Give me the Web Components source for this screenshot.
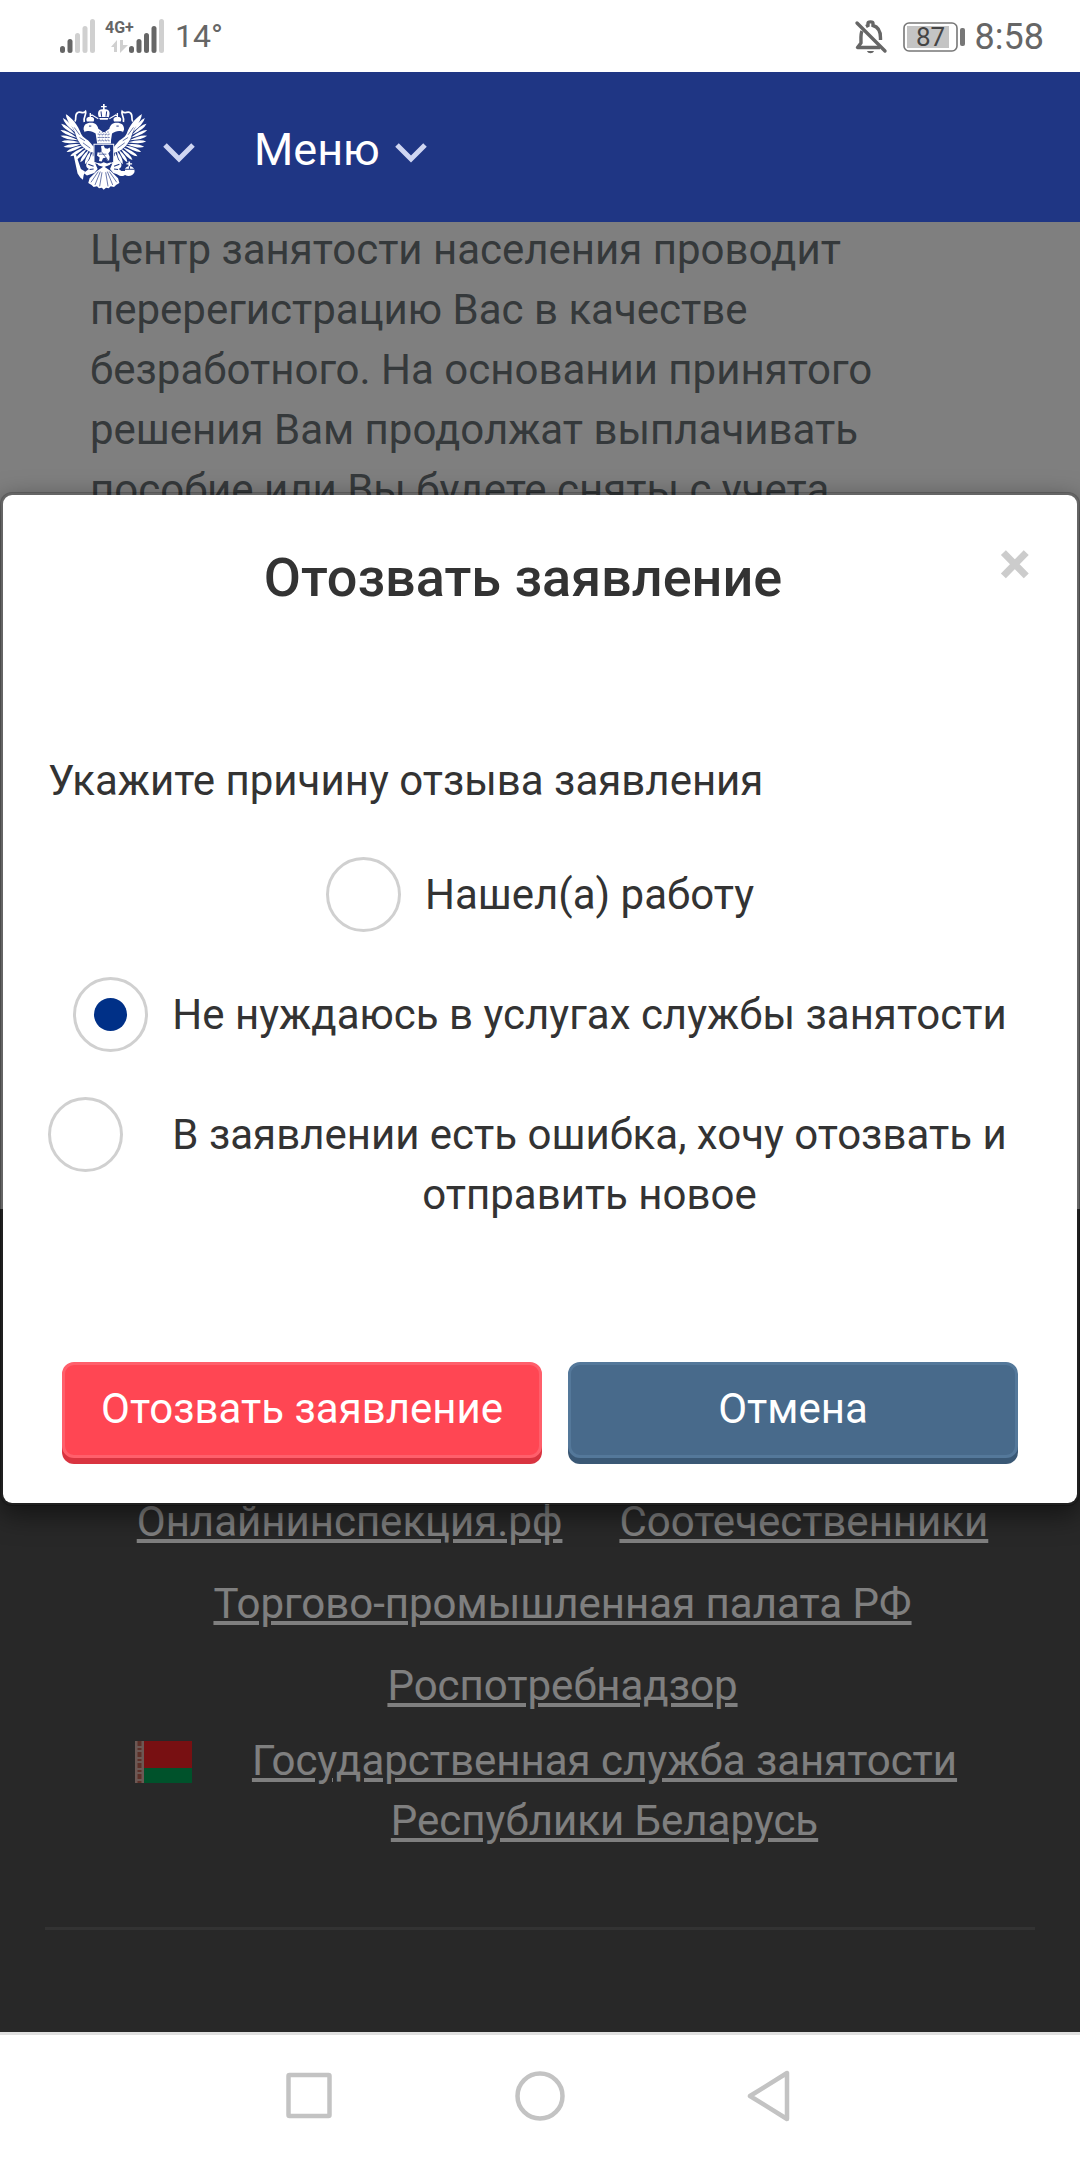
<!DOCTYPE html>
<html lang="ru">
<head>
<meta charset="utf-8">
<meta name="viewport" content="width=device-width, initial-scale=1">
<title>Отозвать заявление</title>
<style>
  * { box-sizing: border-box; }
  html, body { height: 100%; }
  body {
    margin: 0;
    background: #fff;
    color: #333;
    font-family: Roboto, "Noto Sans", sans-serif;
    font-size: 42px;
    line-height: 60px;
  }
</style>
</head>
<body>
<phone-screen>
  <status-bar slot="top"></status-bar>
  <site-header slot="top"></site-header>

  <page-article>Центр занятости населения проводит перерегистрацию Вас в качестве безработного. На основании принятого решения Вам продолжат выплачивать пособие или Вы будете сняты с учета</page-article>
  <site-footer></site-footer>

  <modal-dialog slot="overlay" heading="Отозвать заявление">
    <reason-list></reason-list>
    <action-button slot="actions" kind="danger">Отозвать заявление</action-button>
    <action-button slot="actions">Отмена</action-button>
  </modal-dialog>

  <system-nav slot="bottom"></system-nav>
</phone-screen>

<script>
class PhoneScreen extends HTMLElement {
  connectedCallback() {
    this.attachShadow({ mode: 'open' });
    this.shadowRoot.innerHTML = `
      <style>
        :host {
          display: flex;
          flex-direction: column;
          min-height: 100vh;
        }
        main {
          position: relative;
          flex: 1;
          min-height: 0;
          overflow: hidden;
        }
        /* the page is scrolled to its end */
        .scroll {
          height: 100%;
          display: flex;
          flex-direction: column;
          justify-content: flex-end;
          position: absolute;
          inset: 0;
        }
        .backdrop {
          position: absolute;
          inset: 0;
          padding-top: 270px;
          background: rgba(0, 0, 0, 0.5);
        }
      </style>
      <slot name="top"></slot>
      <main>
        <div class="scroll"><slot></slot></div>
        <div class="backdrop"><slot name="overlay"></slot></div>
      </main>
      <slot name="bottom"></slot>
    `;
  }
}

class StatusBar extends HTMLElement {
  connectedCallback() {
    this.attachShadow({ mode: 'open' });
    this.shadowRoot.innerHTML = `
      <style>
        :host {
          display: flex;
          align-items: center;
          justify-content: space-between;
          height: 72px;
          padding: 0 36px 0 60px;
          background: #fff;
          color: #666;
          line-height: 40px;
        }
        .group { display: flex; align-items: center; }
        .left { gap: 10px; }
        .right { gap: 10px; padding-top: 2px; }
        svg { display: block; overflow: visible; }
        .temp { font-size: 32px; }
        .bell { margin-right: 6px; }
        .clock { font-size: 36px; }
        .net { font-size: 16px; font-weight: 700; }
        .charge { font-size: 26px; }
      </style>
      <div class="group left">
        <svg width="35" height="34" viewBox="0 0 35 34" fill="#666">
          <rect x="0" y="27" width="5" height="7" rx="2.5"/>
          <rect x="7.5" y="20" width="5" height="14" rx="2.5"/>
          <g fill="#d0d0d0">
            <rect x="15" y="14" width="5" height="20" rx="2.5"/>
            <rect x="22.5" y="7" width="5" height="27" rx="2.5"/>
            <rect x="30" y="0" width="5" height="34" rx="2.5"/>
          </g>
        </svg>
        <svg width="60" height="34" viewBox="0 0 60 34" fill="#666">
          <text class="net" x="0" y="14">4G+</text>
          <path d="M6 28l6-7v12H9v-5zM15 21h3v5h5l-8 8z" fill="#d0d0d0"/>
          <rect x="24" y="27" width="5" height="7" rx="2.5"/>
          <rect x="31.5" y="20" width="5" height="14" rx="2.5"/>
          <rect x="39" y="14" width="5" height="20" rx="2.5"/>
          <rect x="46.5" y="7" width="5" height="27" rx="2.5"/>
          <rect x="54" y="0" width="5" height="34" rx="2.5" fill="#d0d0d0"/>
        </svg>
        <span class="temp">14°</span>
      </div>
      <div class="group right">
        <svg class="bell" width="32" height="34" viewBox="0 0 32 34" fill="none" stroke="#666" stroke-width="3.4">
          <path d="M2 3L30 31" stroke-linecap="round"/>
          <path d="M7 11C5.500 14 6 18 6 23L2.500 27.500H25" stroke-linejoin="round"/>
          <path d="M11 6.500L13 5.500V3.500C13 1.500 18 1.500 18 3.500V5.500C24 7 25.500 12 25.500 18V20"/>
          <path d="M12 31h7c-1 3-6 3-7 0z" fill="#666" stroke="none"/>
        </svg>
        <svg width="62" height="30" viewBox="0 0 62 30">
          <rect x="1" y="1" width="53" height="28" rx="5" fill="#fff" stroke="#777" stroke-width="1.600"/>
          <rect x="4" y="4" width="42" height="22" fill="#c4c4c4"/>
          <rect x="57" y="6" width="5" height="18" rx="2" fill="#777"/>
          <text class="charge" x="13" y="24" fill="#444">87</text>
        </svg>
        <span class="clock">8:58</span>
      </div>
    `;
  }
}

// outer wing feathers: base point and tip, left side
const FEATHERS = [
  [72, 104, 47, 58], [74, 112, 38, 70], [76, 120, 33, 87], [80, 129, 31, 106],
  [84, 136, 31, 123], [88, 142, 34, 140], [92, 148, 40, 156], [98, 152, 49, 171],
  [104, 157, 60, 184], [110, 161, 75, 195], [116, 165, 90, 202], [122, 168, 104, 208], [127, 172, 119, 210]
];

function feather([bx, by, tx, ty]) {
  const dx = tx - bx, dy = ty - by;
  const len = Math.hypot(dx, dy);
  const nx = -dy / len * 9, ny = dx / len * 9;
  const mx = bx + dx * 0.7, my = by + dy * 0.7;
  return `M${bx} ${by}Q${mx + nx} ${my + ny} ${tx} ${ty}Q${mx - nx} ${my - ny} ${bx} ${by}z`;
}

class SiteHeader extends HTMLElement {
  connectedCallback() {
    this.attachShadow({ mode: 'open' });
    this.shadowRoot.innerHTML = `
      <style>
        :host {
          display: flex;
          align-items: center;
          gap: 58px;
          box-sizing: border-box;
          height: 150px;
          padding: 5px 60px 0;
          background: #1f3684;
          color: #fff;
        }
        button {
          display: flex;
          align-items: center;
          gap: 14px;
          padding: 0;
          border: 0;
          background: none;
          color: inherit;
          font: inherit;
          font-size: 45px;
          cursor: pointer;
        }
        svg { display: block; }
        .eagle { margin-bottom: 5px; }
        .chevron { fill: none; stroke: #cfd6f2; stroke-width: 5; }
      </style>
      <button aria-label="Госуслуги">
        <svg class="eagle" width="88" height="86" viewBox="30 28 262 257" fill="#fff">
          <defs>
            <g id="half">
              <path d="${FEATHERS.map(feather).join('')}"/>
              <path d="M49 60C64 68 84 92 92 116C98 130 112 132 120 144L130 156V174C112 170 92 156 80 130C74 112 64 84 49 60z"/>
              <path d="M72 98L88 120M88 128L104 138M98 144L120 160" stroke="#1f3684" stroke-width="2"/>
              <!-- ribbon -->
              <path d="M74 80C80 72 72 60 82 54C90 48 98 60 106 50C110 60 98 66 102 82" fill="none" stroke="#fff" stroke-width="5"/>
              <!-- small crown and head -->
              <path d="M118 55h4v5h4v4h-4v3c8 0 12 5 8 13h-20c-4-8 0-13 8-13z"/>
              <path d="M100 104C100 90 108 84 122 84C136 84 142 92 144 102L158 112V142H140L136 116C128 112 122 108 112 109C106 110 102 110 104 114z"/>
              <path d="M116 94h7" stroke="#1f3684" stroke-width="3"/>
              <path d="M124 60L144 72" stroke="#fff" stroke-width="3"/>
              <!-- leg -->
              <path d="M130 182L116 196C104 206 106 218 116 222L100 234L110 242L132 234L142 222L136 208z"/>
              <path d="M114 208L130 214M118 224L130 222" stroke="#1f3684" stroke-width="3"/>
              <!-- tail -->
              <path d="M161 214L140 228L118 250L114 264L124 270L130 276L140 274L146 280L154 278L161 284z"/>
              <path d="M155 232L148 274M150 230L134 270M144 230L122 262" stroke="#1f3684" stroke-width="2"/>
            </g>
          </defs>
          <use href="#half"/>
          <use href="#half" transform="translate(321) scale(-1 1)"/>
          <!-- main crown -->
          <path d="M158 28h5v6h6v4h-6v6c14-2 18 10 12 24l-3 7h-23l-3-7c-6-14-2-26 12-24v-6h-6v-4h6z"/>
          <path d="M152 50L154 66M169 50L167 66M146 68h29" stroke="#1f3684" stroke-width="3"/>
          <path d="M140 112h42v34h-42z"/>
          <path d="M142 118h37M142 128h37M142 138h37M148 110v32M156 110v32M165 110v32M173 110v32" stroke="#1f3684" stroke-width="2" stroke-dasharray="4 4"/>
          <path d="M152 92h17v10l-8 8-9-8z" fill="#1f3684"/>
          <!-- shield with the rider -->
          <path d="M131 148H190V202L161 214L131 202z" fill="#1f3684" stroke="#fff" stroke-width="3"/>
          <path d="M152 154l8-2 4 8 8 2 6-4 2 10-6 8 4 10-2 12-6-2-2-8-10 2-4 10-8-2 2-10-8-6 2-10 8 2 4-8z"/>
          <path d="M142 156L176 200M146 178h22" stroke="#1f3684" stroke-width="2"/>
          <path d="M140 204l12 2 8-4 10 4 12-4-4 8-17 6-16-4z"/>
          <!-- sceptre and orb -->
          <path d="M70 180l7-2 15 44 12 8-4 12-2 12-8-6-8-12z"/>
          <path d="M234 200h5v5h6v4h-6v5c10 2 15 9 13 18-4 10-18 14-28 8-10 6-20 4-24-4l12-8 12 0c-2-6 2-12 10-14v-5h-6v-4h6z"/>
          <path d="M224 223h28M237 214v9" stroke="#1f3684" stroke-width="3"/>
        </svg>
        <svg class="chevron" width="34" height="28" viewBox="0 0 34 28"><path d="M3 9L17 23L31 9"/></svg>
      </button>
      <button>Меню
        <svg class="chevron" width="34" height="28" viewBox="0 0 34 28"><path d="M3 9L17 23L31 9"/></svg>
      </button>
    `;
  }
}

class PageArticle extends HTMLElement {
  connectedCallback() {
    this.attachShadow({ mode: 'open' });
    this.shadowRoot.innerHTML = `
      <style>
        :host {
          display: block;
          flex: none;
          padding: 0 90px 689px;
          background: #fff;
          color: #6b7276;
        }
        p { margin: 0; }
      </style>
      <p><slot></slot></p>
    `;
  }
}

class SiteFooter extends HTMLElement {
  connectedCallback() {
    this.attachShadow({ mode: 'open' });
    this.shadowRoot.innerHTML = `
      <style>
        :host {
          display: block;
          flex: none;
          padding: 283px 45px 102px;
          background: #505050;
          color: #fff;
        }
        ul {
          display: flex;
          flex-wrap: wrap;
          justify-content: center;
          gap: 22px 57px;
          margin: 0 0 15px;
          padding: 0 0 0 45px;
          list-style: none;
        }
        a {
          color: inherit;
          text-decoration-thickness: 4px;
          text-underline-offset: 3px;
        }
        .partner {
          display: flex;
          align-items: flex-start;
          padding: 0 18px 0 90px;
          text-align: center;
        }
        .partner svg { flex: none; margin-top: 10px; }
        .partner span { flex: 1; }
        hr {
          height: 3px;
          margin: 76px 0 0;
          border: 0;
          background: #666;
        }
      </style>
      <ul>
        <li><a href="#">Онлайнинспекция.рф</a></li>
        <li><a href="#">Соотечественники</a></li>
        <li><a href="#">Торгово-промышленная палата РФ</a></li>
        <li><a href="#">Роспотребнадзор</a></li>
      </ul>
      <div class="partner">
        <svg width="57" height="42" viewBox="0 0 57 42">
          <rect width="57" height="27" fill="#f02024"/>
          <rect y="27" width="57" height="15" fill="#00a456"/>
          <rect width="9" height="42" fill="#d8b0a8"/>
          <path d="M4.500 0V42" stroke="#b86050" stroke-width="4" stroke-dasharray="5 2 2 2"/>
        </svg>
        <span><a href="#">Государственная служба занятости Республики Беларусь</a></span>
      </div>
      <hr>
    `;
  }
}

class ModalDialog extends HTMLElement {
  connectedCallback() {
    this.attachShadow({ mode: 'open' });
    this.shadowRoot.innerHTML = `
      <style>
        :host {
          display: block;
          border: 3px solid rgba(0, 0, 0, 0.2);
          border-radius: 12px;
          background: #fff;
          background-clip: padding-box;
          box-shadow: 0 9px 27px rgba(0, 0, 0, 0.5);
          color: #333;
        }
        header {
          display: flex;
          align-items: flex-start;
          padding: 45px 45px 0;
        }
        h2 {
          flex: 1;
          margin: 0;
          font-size: 54px;
          font-weight: 500;
          line-height: 75px;
          text-align: center;
        }
        .close {
          width: 34px;
          padding: 0;
          border: 0;
          background: none;
          color: #ccc;
          font: 700 60px/48px Roboto, sans-serif;
          cursor: pointer;
        }
        .body { padding: 136px 45px 130px; }
        footer {
          display: flex;
          justify-content: center;
          gap: 26px;
          padding-bottom: 45px;
        }
      </style>
      <header>
        <h2></h2>
        <button class="close" aria-label="Закрыть">×</button>
      </header>
      <div class="body"><slot></slot></div>
      <footer><slot name="actions"></slot></footer>
    `;
    this.shadowRoot.querySelector('h2').textContent = this.getAttribute('heading');
    this.setAttribute('role', 'dialog');

    const close = this.shadowRoot.querySelector('.close');
    close.addEventListener('click', () => this.remove());
  }
}

class ReasonList extends HTMLElement {
  connectedCallback() {
    const reasons = [
      'Нашел(а) работу',
      'Не нуждаюсь в услугах службы занятости',
      'В заявлении есть ошибка, хочу отозвать и отправить новое'
    ];
    this.attachShadow({ mode: 'open' });
    this.shadowRoot.innerHTML = `
      <style>
        :host { display: block; }
        fieldset {
          display: flex;
          flex-direction: column;
          gap: 45px;
          margin: 0;
          padding: 0;
          border: 0;
        }
        legend { margin-bottom: 46px; padding: 0; }
        .row {
          display: flex;
          align-items: flex-start;
          justify-content: center;
          gap: 24px;
        }
        input {
          appearance: none;
          display: grid;
          flex: none;
          place-content: center;
          box-sizing: border-box;
          width: 75px;
          height: 75px;
          margin: 0;
          border: 3px solid #d0d0d0;
          border-radius: 50%;
          background: #fff;
        }
        input:checked::before {
          content: '';
          width: 33px;
          height: 33px;
          border-radius: 50%;
          background: #003087;
        }
        label { padding: 8px 0 7px; text-align: center; }
      </style>
      <fieldset>
        <legend>Укажите причину отзыва заявления</legend>
        ${reasons.map((text, i) => `
          <div class="row">
            <input type="radio" name="reason" id="reason-${i}" ${i === 1 ? 'checked' : ''}>
            <label for="reason-${i}">${text}</label>
          </div>
        `).join('')}
      </fieldset>
    `;
  }
}

class ActionButton extends HTMLElement {
  connectedCallback() {
    this.attachShadow({ mode: 'open' });
    this.shadowRoot.innerHTML = `
      <style>
        :host {
          --face: #486a8b;
          --edge: #54789a;
          --base: #3a5875;
          display: block;
          min-width: 450px;
        }
        :host([kind="danger"]) {
          --face: #ff4653;
          --edge: #ff5f6b;
          --base: #d93440;
        }
        button {
          width: 100%;
          height: 96px;
          padding: 0 36px 2px;
          border: 3px solid var(--edge);
          border-radius: 12px;
          background: var(--face);
          box-shadow: 0 6px 0 var(--base);
          color: #fff;
          font: inherit;
          cursor: pointer;
        }
      </style>
      <button><slot></slot></button>
    `;
  }
}

class SystemNav extends HTMLElement {
  connectedCallback() {
    this.attachShadow({ mode: 'open' });
    this.shadowRoot.innerHTML = `
      <style>
        :host {
          display: flex;
          align-items: center;
          justify-content: center;
          gap: 170px;
          box-sizing: border-box;
          height: 128px;
          padding-bottom: 3px;
          border-top: 3px solid #e0e0e0;
          background: #fff;
        }
        button { padding: 0; border: 0; background: none; }
        svg {
          display: block;
          fill: none;
          stroke: #c3c3c3;
          stroke-width: 4.500;
          stroke-linejoin: round;
        }
      </style>
      <button aria-label="Недавние"><svg width="60" height="60" viewBox="0 0 60 60"><rect x="8.500" y="9" width="41" height="41" rx="1"/></svg></button>
      <button aria-label="Домой"><svg width="60" height="60" viewBox="0 0 60 60"><circle cx="30" cy="30" r="22.500"/></svg></button>
      <button aria-label="Назад"><svg width="60" height="60" viewBox="0 0 60 60"><path d="M10 30L47 7V53z"/></svg></button>
    `;
  }
}

customElements.define('phone-screen', PhoneScreen);
customElements.define('status-bar', StatusBar);
customElements.define('site-header', SiteHeader);
customElements.define('page-article', PageArticle);
customElements.define('site-footer', SiteFooter);
customElements.define('modal-dialog', ModalDialog);
customElements.define('reason-list', ReasonList);
customElements.define('action-button', ActionButton);
customElements.define('system-nav', SystemNav);
</script>
</body>
</html>
